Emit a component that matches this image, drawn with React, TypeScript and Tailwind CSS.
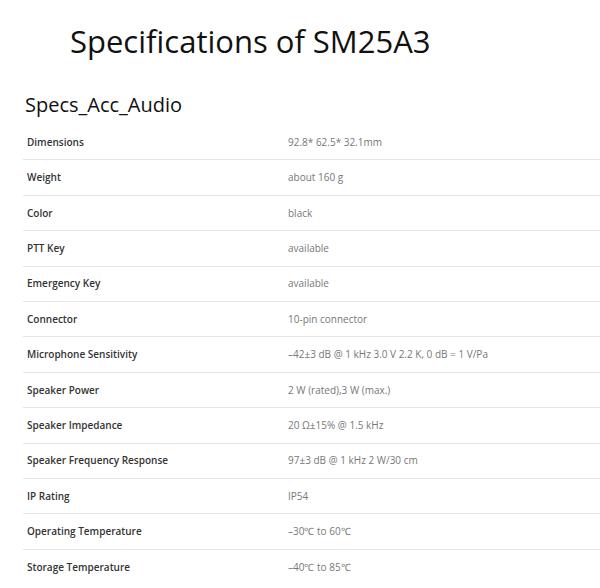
const specs: [string, string][] = [
  ['Dimensions', '92.8* 62.5* 32.1mm'],
  ['Weight', 'about 160 g'],
  ['Color', 'black'],
  ['PTT Key', 'available'],
  ['Emergency Key', 'available'],
  ['Connector', '10-pin connector'],
  ['Microphone Sensitivity', '–42±3 dB @ 1 kHz 3.0 V 2.2 K, 0 dB = 1 V/Pa'],
  ['Speaker Power', '2 W (rated),3 W (max.)'],
  ['Speaker Impedance', '20 Ω±15% @ 1.5 kHz'],
  ['Speaker Frequency Response', '97±3 dB @ 1 kHz 2 W/30 cm'],
  ['IP Rating', 'IP54'],
  ['Operating Temperature', '–30℃ to 60℃'],
  ['Storage Temperature', '–40℃ to 85℃'],
];

export default function App() {
  return (
    <div className="w-[600px] h-[588px] overflow-hidden bg-white font-['Open_Sans',sans-serif]">
      <h1 className="pl-[70px] pt-[21px] text-[31px] leading-[40px] text-[#111]">
        Specifications of SM25A3
      </h1>
      <h2 className="pl-[25px] mt-[30px] text-[20px] leading-[28px] text-[#111]">
        Specs_Acc_Audio
      </h2>
      <div className="ml-[23px] mt-[6px]">
        {specs.map(([label, value], i) => (
          <div
            key={label}
            className={`flex items-center h-[35.42px] ${i < specs.length - 1 ? 'border-b border-[#e6e6e6]' : ''}`}
          >
            <div className="w-[265px] pl-[4px] text-[10px] font-semibold text-[#333]">{label}</div>
            <div className="text-[10px] text-[#777]">{value}</div>
          </div>
        ))}
      </div>
    </div>
  );
}
